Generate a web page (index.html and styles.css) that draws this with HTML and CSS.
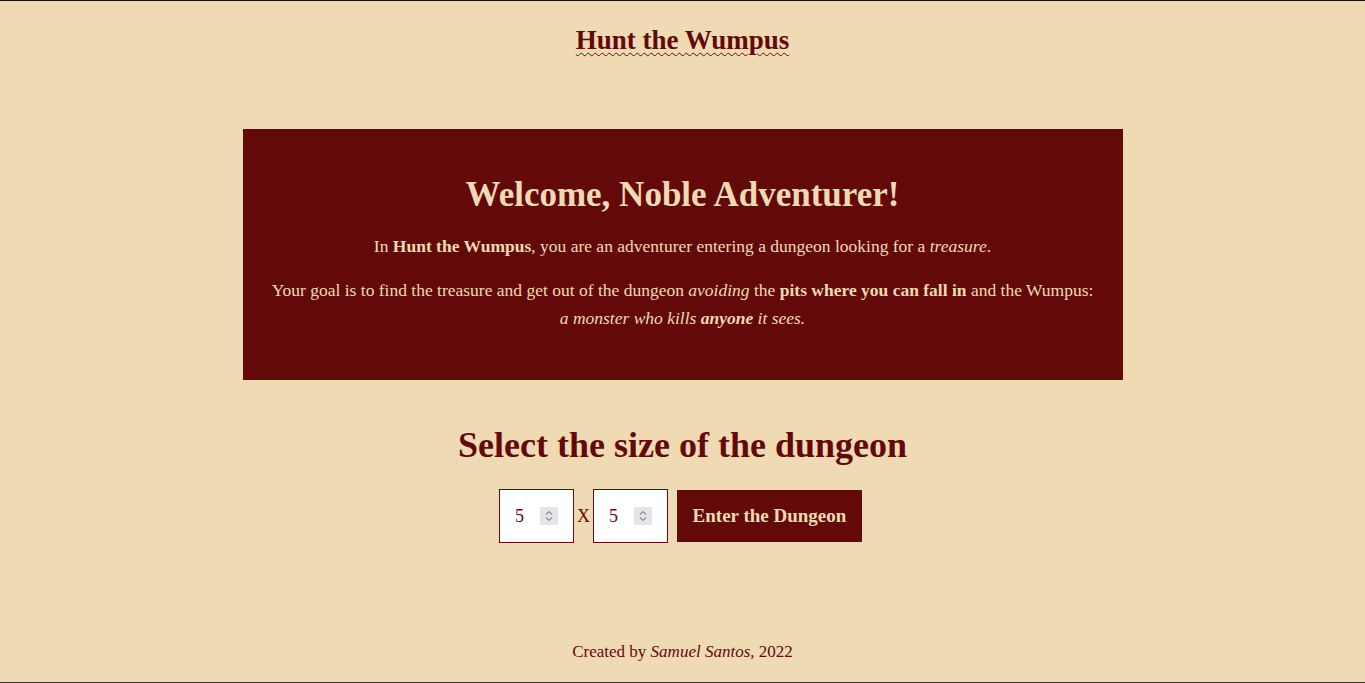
FILE: index.html
```html
<!DOCTYPE html>
<html lang="en">
<head>
<meta charset="utf-8">
<title>Hunt the Wumpus</title>
<link rel="stylesheet" href="styles.css">
</head>
<body>
<div class="page">
  <header class="top">
    <h1 class="title">Hunt the Wumpus</h1>
  </header>
  <main class="main">
    <section class="welcome">
      <h2 class="welcome-title">Welcome, Noble Adventurer!</h2>
      <p class="welcome-text">In <b>Hunt the Wumpus</b>, you are an adventurer entering a dungeon looking for a <i>treasure</i>.</p>
      <p class="welcome-text">Your goal is to find the treasure and get out of the dungeon <i>avoiding</i> the <b>pits where you can fall in</b> and the Wumpus:<br><i>a monster who kills <b>anyone</b> it sees.</i></p>
    </section>
    <section class="select">
      <h2 class="select-title">Select the size of the dungeon</h2>
      <form class="size-form">
        <div class="num-box"><span class="num-val">5</span><span class="spin"><svg width="12" height="16" viewBox="0 0 12 16"><path d="M3 6.5 L6 3.5 L9 6.5 M3 9.5 L6 12.5 L9 9.5" fill="none" stroke="#8a8a90" stroke-width="1.2"/></svg></span></div>
        <span class="times">X</span>
        <div class="num-box"><span class="num-val">5</span><span class="spin"><svg width="12" height="16" viewBox="0 0 12 16"><path d="M3 6.5 L6 3.5 L9 6.5 M3 9.5 L6 12.5 L9 9.5" fill="none" stroke="#8a8a90" stroke-width="1.2"/></svg></span></div>
        <button type="button" class="enter-btn">Enter the Dungeon</button>
      </form>
    </section>
  </main>
  <footer class="foot">Created by <i>Samuel Santos</i>, 2022</footer>
</div>
</body>
</html>
```
FILE: styles.css
```css
html, body {
  margin: 0;
  padding: 0;
}
body {
  background: #f0dab4;
  color: #630909;
  font-family: "Liberation Serif", "DejaVu Serif", serif;
}
.page {
  box-sizing: border-box;
  height: 683px;
  border-top: 1px solid #111;
  border-bottom: 1px solid #333;
  display: flex;
  flex-direction: column;
  align-items: center;
}
.top {
  padding-top: 24px;
  height: 128px;
  box-sizing: border-box;
}
.title {
  margin: 0;
  font-size: 27px;
  line-height: 30px;
  font-weight: bold;
  text-decoration: underline wavy #630909;
  text-decoration-thickness: 1px;
  text-underline-offset: 3px;
}
.main {
  display: flex;
  flex-direction: column;
  align-items: center;
}
.welcome {
  width: 880px;
  height: 251px;
  box-sizing: border-box;
  background: #630909;
  color: #f0dab4;
  text-align: center;
  padding-top: 46px;
}
.welcome-title {
  margin: 0 0 17px;
  font-size: 35px;
  line-height: 40px;
}
.welcome-text {
  margin: 0 0 16px;
  font-size: 17.5px;
  line-height: 28px;
}
.select {
  display: flex;
  flex-direction: column;
  align-items: center;
  padding-top: 45px;
}
.select-title {
  margin: 0 0 24px;
  font-size: 36px;
  line-height: 40px;
}
.size-form {
  display: flex;
  align-items: center;
  margin-right: 4px;
}
.num-box {
  width: 75px;
  height: 54px;
  box-sizing: border-box;
  border: 1px solid #630909;
  background: #fff;
  display: flex;
  align-items: center;
  padding-left: 15px;
  gap: 15px;
}
.num-val {
  font-size: 18px;
  color: #630909;
  width: 10px;
}
.spin {
  width: 18px;
  height: 18px;
  background: #e6e4ea;
  display: flex;
  align-items: center;
  justify-content: center;
}
.times {
  font-size: 18px;
  width: 19px;
  text-align: center;
}
.enter-btn {
  margin-left: 9px;
  width: 185px;
  height: 52px;
  border: none;
  background: #630909;
  color: #f0dab4;
  font-family: "Liberation Serif", "DejaVu Serif", serif;
  font-weight: bold;
  font-size: 19px;
  padding: 0;
}
.foot {
  margin-top: auto;
  padding-bottom: 20px;
  font-size: 17px;
  line-height: 20px;
}
```
